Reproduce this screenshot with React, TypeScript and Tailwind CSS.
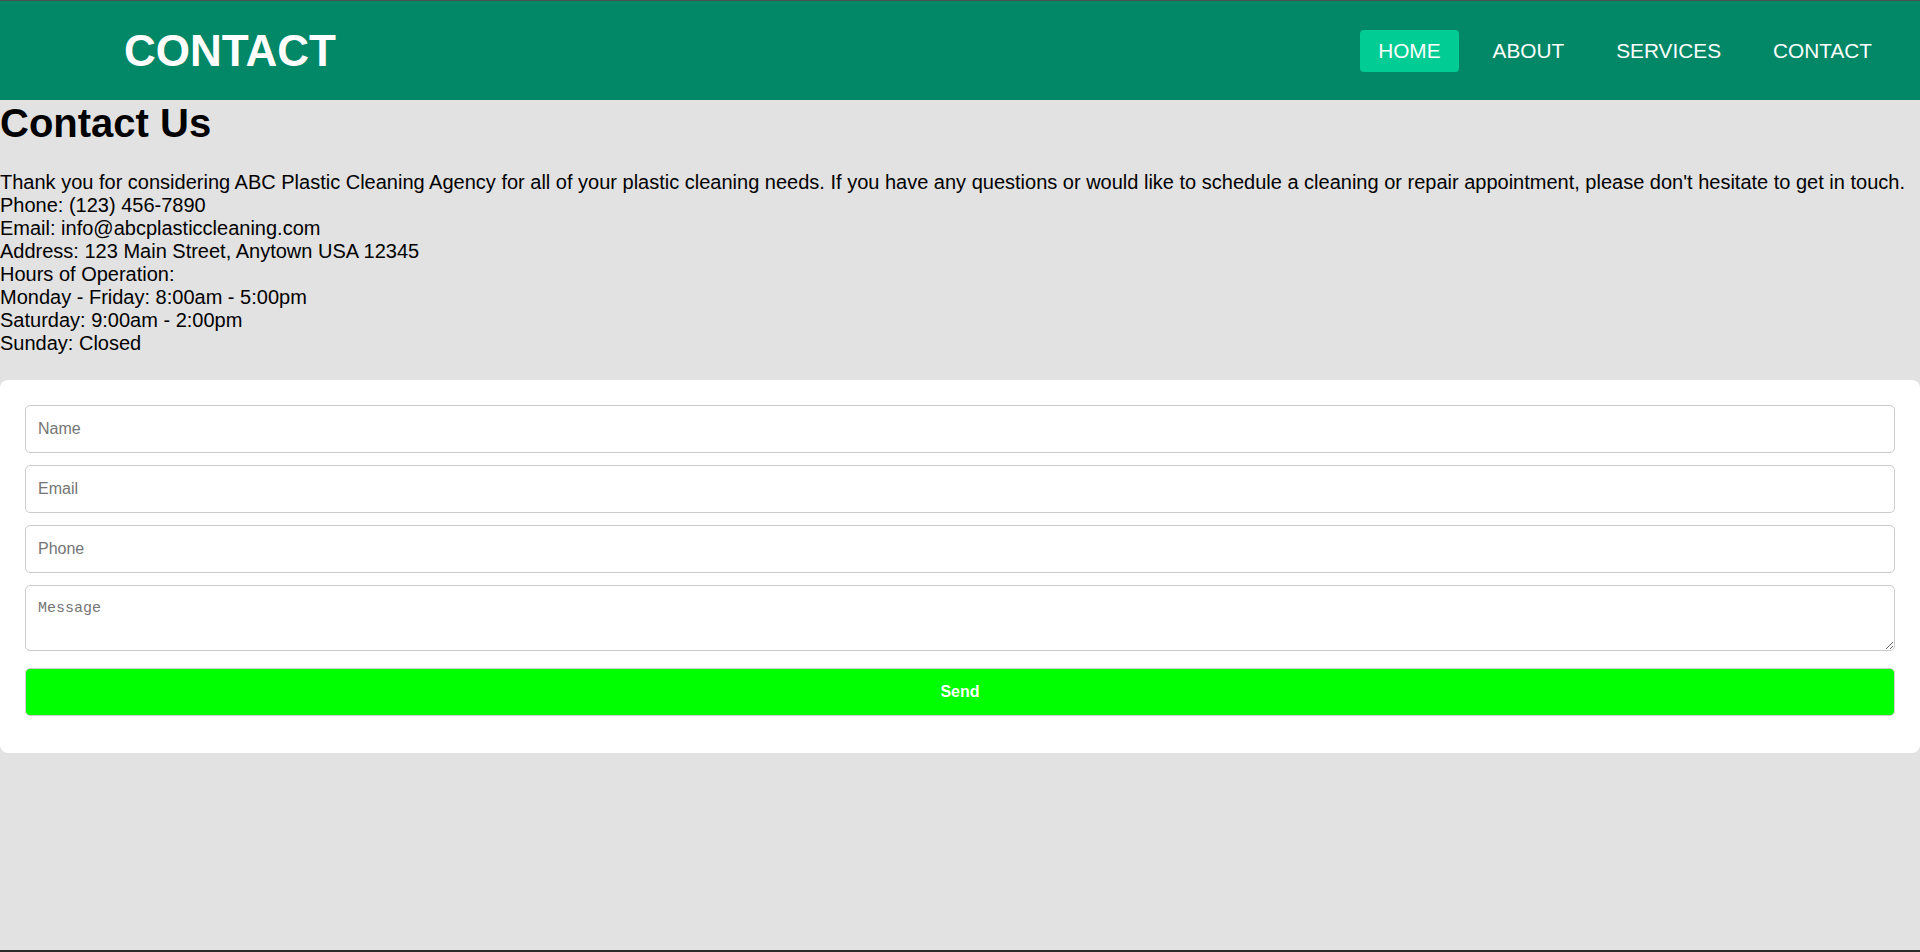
import { useState } from "react";

const links = ["HOME", "ABOUT", "SERVICES", "CONTACT"];

export default function App() {
  const [form, setForm] = useState({ name: "", email: "", phone: "", message: "" });

  return (
    <div className="min-h-[952px] flex flex-col bg-[#e2e2e2] text-black font-['Liberation_Sans',Arial,sans-serif]">

      <header className="h-[100px] border-t border-[#505050] bg-[#028767] flex items-center justify-between pl-[124px] pr-[30px]">
        <div className="text-[44px] font-bold text-white leading-none">CONTACT</div>
        <nav className="flex items-center gap-4">
          {links.map((l, i) => (
            <a
              key={l}
              href="#"
              className={
                "h-[42px] px-[18px] flex items-center rounded-[4px] text-[20.8px] text-white " +
                (i === 0 ? "bg-[#00cc93]" : "")
              }
            >
              {l}
            </a>
          ))}
        </nav>
      </header>

      <h1 className="text-[40px] font-bold leading-[46px]">Contact Us</h1>

      <div className="mt-[25px] text-[20px] leading-[23px]">
        <p>
          Thank you for considering ABC Plastic Cleaning Agency for all of your plastic cleaning needs. If you have any questions or would like to schedule a cleaning or repair appointment, please don't hesitate to get in touch.
        </p>
        <p>Phone: (123) 456-7890</p>
        <p>Email: info@abcplasticcleaning.com</p>
        <p>Address: 123 Main Street, Anytown USA 12345</p>
        <p>Hours of Operation:</p>
        <p>Monday - Friday: 8:00am - 5:00pm</p>
        <p>Saturday: 9:00am - 2:00pm</p>
        <p>Sunday: Closed</p>
      </div>

      <form
        className="mt-[25px] bg-white rounded-[8px] pt-[25px] pb-[37px] px-[25px] flex flex-col"
        onSubmit={(e) => e.preventDefault()}
      >
        <input
          placeholder="Name"
          value={form.name}
          onChange={(e) => setForm({ ...form, name: e.target.value })}
          className="h-[48px] border border-[#cccccc] rounded-[5px] px-[12px] text-[16px] placeholder:text-[#757575]"
        />
        <input
          placeholder="Email"
          value={form.email}
          onChange={(e) => setForm({ ...form, email: e.target.value })}
          className="mt-[12px] h-[48px] border border-[#cccccc] rounded-[5px] px-[12px] text-[16px] placeholder:text-[#757575]"
        />
        <input
          placeholder="Phone"
          value={form.phone}
          onChange={(e) => setForm({ ...form, phone: e.target.value })}
          className="mt-[12px] h-[48px] border border-[#cccccc] rounded-[5px] px-[12px] text-[16px] placeholder:text-[#757575]"
        />
        <textarea
          placeholder="Message"
          value={form.message}
          onChange={(e) => setForm({ ...form, message: e.target.value })}
          className="mt-[12px] h-[66px] border border-[#cccccc] rounded-[5px] px-[12px] pt-[14px] pb-[10px] text-[15px] leading-[17px] font-['Liberation_Mono',monospace] placeholder:text-[#757575]"
        />
        <button
          type="submit"
          className="mt-[17px] h-[48px] bg-[#00ff00] border border-[#d0d0d0] rounded-[5px] text-white text-[16px] font-bold"
        >
          Send
        </button>
      </form>

      <div className="mt-auto h-[2px] bg-[#2b2b2b]" />
    </div>
  );
}
